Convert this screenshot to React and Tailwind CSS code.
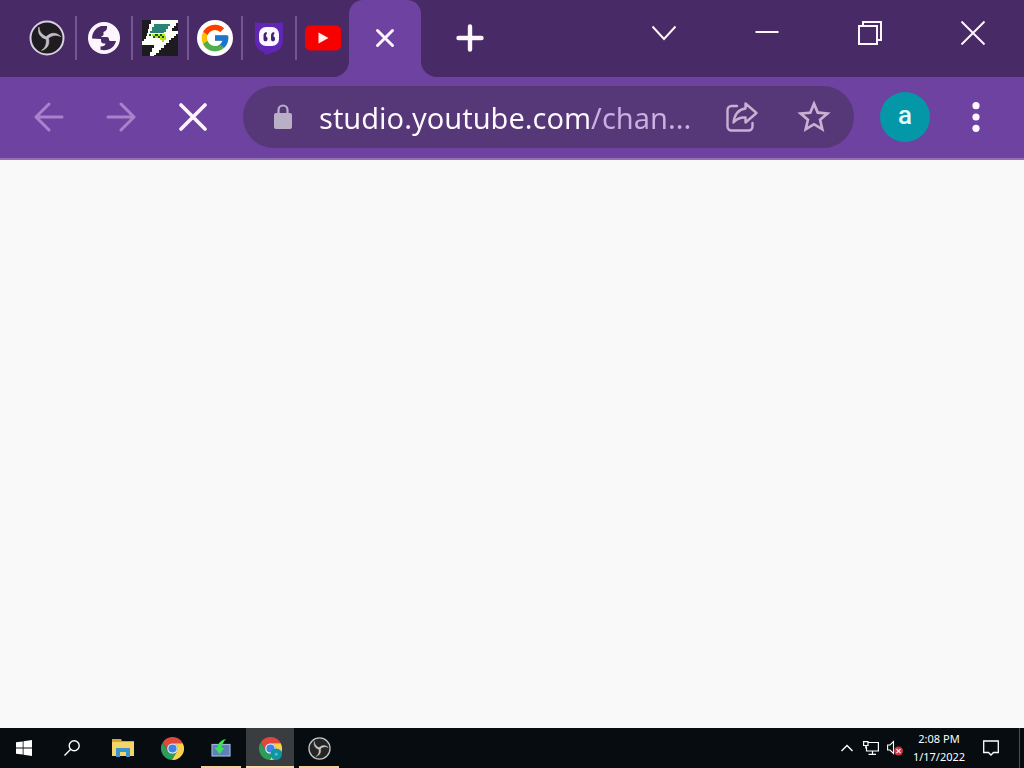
import React from "react";
import { FcGoogle } from "react-icons/fc";
import { MdStarBorder } from "react-icons/md";

const blade = "M17 17.500L19 17C21 22 20 28.500 12.500 30.500C17 27.500 18 23 17 17.500Z";

const ObsIcon = ({ className, ring, fill, arms }) => (
  <svg viewBox="0 0 36 36" className={className}>
    <circle cx="18" cy="18" r="16.500" fill={fill} stroke={ring} strokeWidth="2" />
    <g fill={arms} stroke={arms} strokeWidth="0.600" strokeLinejoin="round">
      <path d={blade} />
      <path d={blade} transform="rotate(120 18 18)" />
      <path d={blade} transform="rotate(240 18 18)" />
    </g>
  </svg>
);

const ObsTabIcon = () => <ObsIcon className="size-9" ring="#d9cfe2" fill="#1f1c20" arms="#c3bfc6" />;

const GlobeIcon = () => (
  <svg viewBox="0 0 32 32" className="size-8">
    <circle cx="16" cy="16" r="16" fill="#fdf6ff" />
    <path
      d="M4 16.500C4 11 7 6 13 4H19C19.500 7 18.500 9 15.500 10V12.500C15.500 13.500 14.500 14 13.500 14V16C13.500 16.800 13 17 12 17Z"
      fill="#472a66"
    />
    <path
      d="M13 15H18.500C20.500 15 21 16 21 17.500C21 18.500 22 19 23 19H28C27 24 22.500 28.300 16 28.300L12.500 27.800V24.500C15.500 24.500 17.500 23.500 17.500 21.500H16C14 21.500 13 20.500 13 18.500Z"
      fill="#472a66"
    />
  </svg>
);

const BoltIcon = () => (
  <svg viewBox="0 0 36 36" className="size-9" shapeRendering="crispEdges">
    <path d="M0 0H36V36H0Z" fill="#1e1b20" />
    <path
      d="M9 0H36V3H34V6H32V8H30V11H36V14H34V16H32V18H29V20H27V23H24V25H22V28H19V30H17V33H14V35H12V36H8V32H10V28H12V25H0V21H2V19H4V16H5V13H6V9H7V4H9Z"
      fill="#fbfff8"
    />
    <path d="M12 4H28V6H26V9H24V12H22V13H8V11H10V7H12Z" fill="#2b8378" />
    <path d="M7 14H9V16H7ZM13 14H16V16H13ZM18 14H20V16H18ZM11 16H13V18H11ZM16 16H18V18H16ZM20 16H22V18H20Z" fill="#2c4a12" />
    <path d="M10 14H13V16H10ZM16 14H18V16H16ZM20 14H23V16H20ZM13 16H16V18H13ZM18 16H20V18H18ZM22 16H24V20H22V22H20V20H18V18H22Z" fill="#b4e61a" />
  </svg>
);

const QuoteBadgeIcon = () => (
  <svg viewBox="0 0 30 34" className="h-[34px] w-[30px]">
    <path d="M1 1L6 2H24L29 1V20C29 26 25 30 20 31L11 34L10 31C5 30 1 26 1 20Z" fill="#6026b6" />
    <rect x="5" y="6" width="20" height="19" rx="7" fill="#fbf6ff" />
    <path
      d="M12.500 11C10 11.500 9.500 13 9.500 15V18C9.500 19.500 10.200 20.300 11.500 20.300C12.800 20.300 13.500 19.500 13.500 18C13.500 16.500 13 15.500 12 15.500C12 14 12.300 13 13 12.500ZM20 11C17.500 11.500 17 13 17 15V18C17 19.500 17.700 20.300 19 20.300C20.300 20.300 21 19.500 21 18C21 16.500 20.500 15.500 19.500 15.500C19.500 14 19.800 13 20.500 12.500Z"
      fill="#3f2272"
    />
  </svg>
);

const GoogleIcon = () => (
  <span className="flex size-9 items-center justify-center rounded-full bg-white">
    <FcGoogle className="size-8" />
  </span>
);

const YoutubeIcon = () => (
  <svg viewBox="0 0 36 26" className="h-[26px] w-9">
    <rect x="0" y="0.500" width="36" height="25" rx="5" fill="#f80000" />
    <path d="M13.500 7.500L23.500 13L13.500 18.500Z" fill="#fff0ee" />
  </svg>
);

const sector = "M12 6.500H22.670A12 12 0 0 0 1.900 5.510L7.240 14.750A5.500 5.500 0 0 1 12 6.500Z";

const ChromeLogo = ({ badge }) => (
  <svg viewBox="0 0 24 24" className="size-[23px]">
    <path d={sector} fill="#e0483c" />
    <path d={sector} transform="rotate(-120 12 12)" fill="#2a9d58" />
    <path d={sector} transform="rotate(120 12 12)" fill="#fbd04b" />
    <circle cx="12" cy="12" r="5.600" fill="#eef3f8" />
    <circle cx="12" cy="12" r="4.300" fill="#3f83ea" />
    {badge && (
      <>
        <circle cx="18" cy="18" r="6" fill="#0f95a3" />
        <circle cx="18" cy="18" r="1.500" fill="#57c0c8" />
      </>
    )}
  </svg>
);

const tabs = [
  { name: "OBS", Icon: ObsTabIcon, size: "w-14" },
  { name: "Website", Icon: GlobeIcon, size: "w-14" },
  { name: "Bolt", Icon: BoltIcon, size: "w-14" },
  { name: "Google", Icon: GoogleIcon, size: "w-[54px]" },
  { name: "Quotes", Icon: QuoteBadgeIcon, size: "w-[54px]" },
  { name: "YouTube", Icon: YoutubeIcon, size: "w-[54px]" },
];

function TabStrip() {
  return (
    <header className="flex h-[77px] shrink-0 bg-[linear-gradient(#472a66_50%,#6e42a1_50%)]">
      <nav aria-label="Tabs" className="flex items-center rounded-br-[16px] bg-[#472a66] pb-px pl-[19px]">
        {tabs.map(({ name, Icon, size }, i) => (
          <button
            key={name}
            aria-label={name}
            className={`flex h-11 items-center justify-center ${size} ${i > 0 ? "border-l-2 border-[#745695]" : ""}`}
          >
            <Icon />
          </button>
        ))}
      </nav>
      <div className="flex w-[72px] items-center justify-center rounded-t-[14px] bg-[#6e42a1] pb-px">
        <button aria-label="Close tab" className="p-2">
          <svg viewBox="0 0 20 20" className="size-5" stroke="#fff5fc" strokeWidth="3" strokeLinecap="round">
            <path d="M2.500 2.500L17.500 17.500M17.500 2.500L2.500 17.500" />
          </svg>
        </button>
      </div>
      <div className="flex flex-1 justify-between rounded-bl-[16px] bg-[#472a66] pb-px">
        <button aria-label="New tab" className="flex w-[98px] items-center justify-center">
          <svg viewBox="0 0 28 28" className="size-7" stroke="#fff5fc" strokeWidth="4.400" strokeLinecap="round">
            <path d="M14 2.500V25.500M2.500 14H25.500" />
          </svg>
        </button>
        <div className="flex h-[66px]">
          <button aria-label="Search tabs" className="flex w-[103px] items-center justify-center">
            <svg viewBox="0 0 24 24" className="size-6" fill="none" stroke="#fff5fc" strokeWidth="2">
              <path d="M0.500 5.500L12 18L23.500 5.500" />
            </svg>
          </button>
          <button aria-label="Minimize" className="flex w-[103px] items-center justify-center">
            <svg viewBox="0 0 24 24" className="size-6" stroke="#fff5fc" strokeWidth="2">
              <path d="M0.500 11H23.500" />
            </svg>
          </button>
          <button aria-label="Restore" className="flex w-[103px] items-center justify-center">
            <svg viewBox="0 0 24 24" className="size-6" fill="none" stroke="#fff5fc" strokeWidth="2">
              <path d="M1 5H19V23H1ZM5 5V1H23V19H19" />
            </svg>
          </button>
          <button aria-label="Close" className="flex w-[103px] items-center justify-center">
            <svg viewBox="0 0 24 24" className="size-6" stroke="#fff5fc" strokeWidth="2">
              <path d="M0.500 0.500L23.500 23.500M23.500 0.500L0.500 23.500" />
            </svg>
          </button>
        </div>
      </div>
    </header>
  );
}

function Toolbar() {
  return (
    <div className="flex h-[83px] shrink-0 items-center border-b-2 border-[#9370b4] bg-[#6e42a1] pr-3 pb-px pl-[13px]">
      <button aria-label="Back" className="flex h-14 w-[72px] items-center justify-center">
        <svg viewBox="0 0 30 30" className="size-[30px]" fill="none" stroke="#a883cc" strokeWidth="3" strokeLinecap="round" strokeLinejoin="round">
          <path d="M28 15H2M15 2L2 15L15 28" />
        </svg>
      </button>
      <button aria-label="Forward" className="flex h-14 w-[72px] items-center justify-center">
        <svg viewBox="0 0 30 30" className="size-[30px]" fill="none" stroke="#a883cc" strokeWidth="3" strokeLinecap="round" strokeLinejoin="round">
          <path d="M2 15H28M15 2L28 15L15 28" />
        </svg>
      </button>
      <button aria-label="Stop loading" className="flex h-14 w-[72px] items-center justify-center">
        <svg viewBox="0 0 28 28" className="size-7" stroke="#fff5fc" strokeWidth="3.600" strokeLinecap="round">
          <path d="M2 2L26 26M26 2L2 26" />
        </svg>
      </button>
      <form
        onSubmit={(e) => e.preventDefault()}
        className="ml-[14px] flex h-[62px] min-w-0 flex-1 items-center rounded-full bg-[#563777] pl-[30px]"
      >
        <button type="button" aria-label="Site information" className="shrink-0">
          <svg viewBox="0 0 20 26" className="h-[26px] w-5">
            <rect x="1" y="9" width="18" height="16" rx="2" fill="#b9b0c6" />
            <path d="M5.500 10V6A4.500 4.500 0 0 1 14.500 6V10" fill="none" stroke="#b9b0c6" strokeWidth="2.200" />
          </svg>
        </button>
        <input
          type="text"
          aria-label="Address"
          defaultValue="studio.youtube.com/chan..."
          className="ml-[26px] h-12 min-w-0 flex-1 bg-[linear-gradient(90deg,#fffaff_272px,#cbb0e2_272px)] bg-clip-text font-['Noto_Sans',sans-serif] text-[29px] text-transparent caret-white outline-none"
        />
        <button type="button" aria-label="Share" className="flex h-12 w-[72px] shrink-0 items-center justify-center">
          <svg viewBox="0 0 34 32" className="h-8 w-[34px]" fill="none" stroke="#c7b2d3" strokeWidth="2.400" strokeLinejoin="round" strokeLinecap="round">
            <path d="M12 5H6.500A4 4 0 0 0 2.500 9V25.500A4 4 0 0 0 6.500 29.500H23.500A4 4 0 0 0 27.500 25.500V22" />
            <path d="M20.500 2.500L31.500 12L20.500 21.500V16.500C15 16 11.500 18 8.500 21.500C9.500 13.500 13.500 8.500 20.500 7.500Z" />
          </svg>
        </button>
        <button type="button" aria-label="Bookmark this page" className="mr-1 flex h-12 w-[72px] shrink-0 items-center justify-center">
          <MdStarBorder className="size-10 text-[#c7b2d3]" />
        </button>
      </form>
      <button
        aria-label="Profile a"
        className="ml-[26px] flex size-[50px] shrink-0 items-center justify-center rounded-full bg-[#0497a7] pb-1 font-[Roboto,sans-serif] text-[26px] leading-7 font-medium text-[#e4fbfb]"
      >
        a
      </button>
      <button aria-label="Menu" className="ml-[10px] flex h-14 w-[72px] shrink-0 items-center justify-center">
        <svg viewBox="0 0 8 30" className="h-[30px] w-2" fill="#fff5fc">
          <circle cx="4" cy="3.700" r="3.600" />
          <circle cx="4" cy="15" r="3.600" />
          <circle cx="4" cy="26.300" r="3.600" />
        </svg>
      </button>
    </div>
  );
}

const ExplorerIcon = () => (
  <svg viewBox="0 0 22 18" className="h-[18px] w-[22px]">
    <path d="M0 0H9L10 2H22V17H0Z" fill="#d9a332" />
    <path d="M0 3H22V17H0Z" fill="#f7d468" />
    <path d="M4 9H18V18H14V13H8V18H4Z" fill="#3a94cf" />
  </svg>
);

const DownloadAppIcon = () => (
  <svg viewBox="0 0 20 18" className="h-[18px] w-5">
    <rect x="1" y="5.500" width="18" height="11.500" fill="#5f80bd" stroke="#9db4cc" strokeWidth="1.200" />
    <path d="M15 0C10 1 7 4 6.500 8.500H3.500L8.500 15L13.500 9H10.500C11 5.500 12.500 2.500 15 0Z" fill="#3be452" />
  </svg>
);

const apps = [
  { name: "File Explorer", icon: <ExplorerIcon /> },
  { name: "Google Chrome", icon: <ChromeLogo /> },
  { name: "Downloader", icon: <DownloadAppIcon />, running: true },
  { name: "Google Chrome, profile a", icon: <ChromeLogo badge />, active: true },
  {
    name: "OBS Studio",
    icon: <ObsIcon className="size-[23px]" ring="#c5c5c5" fill="#252526" arms="#c5c5c5" />,
    running: true,
  },
];

function Taskbar() {
  return (
    <footer className="flex h-10 shrink-0 bg-[#060c10] text-white">
      <button aria-label="Start" className="flex w-12 items-center justify-center">
        <svg viewBox="0 0 16 16" className="size-4" fill="#fff">
          <path d="M0 2.300L6.700 1.400V7.600H0ZM7.500 1.300L16 0V7.600H7.500ZM0 8.400H6.700V14.600L0 13.700ZM7.500 8.400H16V16L7.500 14.700Z" />
        </svg>
      </button>
      <button aria-label="Search" className="flex w-12 items-center justify-center">
        <svg viewBox="0 0 16 16" className="size-4" fill="none" stroke="#fff" strokeWidth="1.400">
          <circle cx="10.200" cy="5.800" r="5" />
          <path d="M6.700 9.300L0.500 15.500" />
        </svg>
      </button>
      <div className="ml-[3px] flex gap-px">
        {apps.map(({ name, icon, running, active }) => (
          <button
            key={name}
            aria-label={name}
            className={`flex w-12 flex-col items-center ${active ? "bg-[#3a3d3f]" : ""}`}
          >
            <span className="flex h-[38px] items-center justify-center pt-0.5">{icon}</span>
            {active && <span className="h-0.5 w-full bg-[#fbdba5]" />}
            {running && <span className="h-0.5 w-10 bg-[#f3d09b]" />}
          </button>
        ))}
      </div>
      <div className="ml-auto flex pr-1">
        <button aria-label="Show hidden icons" className="flex w-6 items-center justify-center">
          <svg viewBox="0 0 12 8" className="h-2 w-3" fill="none" stroke="#fff" strokeWidth="1.400">
            <path d="M0.500 7L6 1.500L11.500 7" />
          </svg>
        </button>
        <button aria-label="Network" className="flex w-6 items-center justify-center">
          <svg viewBox="0 0 16 14" className="h-[14px] w-4" fill="none" stroke="#fff" strokeWidth="1.200">
            <path d="M5 1.500H15.400V10H3.500V5.500M9.500 10V13M5.500 13.300H13" />
            <path d="M0.600 0.600H5V4.500H0.600ZM2.800 4.500V7.500" />
          </svg>
        </button>
        <button aria-label="Volume muted" className="flex w-6 items-center justify-center">
          <svg viewBox="0 0 16 16" className="size-4">
            <path d="M0.600 5H3L6.500 1.500V13.500L3 10H0.600Z" fill="none" stroke="#fff" strokeWidth="1.100" />
            <circle cx="11.500" cy="11" r="4.500" fill="#cf3340" />
            <path d="M9.500 9L13.500 13M13.500 9L9.500 13" stroke="#ffe4e4" strokeWidth="1.200" />
          </svg>
        </button>
        <button className="flex w-16 flex-col items-center justify-center font-['Noto_Sans',sans-serif] text-[11px] leading-[18px]">
          <span>2:08 PM</span>
          <span>1/17/2022</span>
        </button>
        <button aria-label="Notifications" className="flex w-10 items-center justify-center">
          <svg viewBox="0 0 16 16" className="size-4" fill="none" stroke="#fff" strokeWidth="1.300">
            <path d="M0.700 1H15.300V12.500H10.500L8 15L5.500 12.500H0.700Z" />
          </svg>
        </button>
        <button aria-label="Show desktop" className="ml-2 w-px bg-[#4b5054]" />
      </div>
    </footer>
  );
}

export default function App() {
  return (
    <div className="flex min-h-screen flex-col bg-[#f9f9f9]">
      <TabStrip />
      <Toolbar />
      <main className="flex-1 bg-[#f9f9f9]" />
      <Taskbar />
    </div>
  );
}
